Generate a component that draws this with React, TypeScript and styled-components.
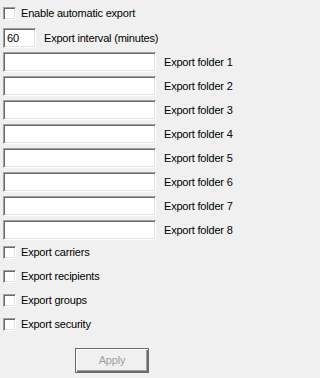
import React from "react";
import styled, { createGlobalStyle } from "styled-components";

const Global = createGlobalStyle`
  html, body {
    margin: 0;
    padding: 0;
    background: #f0f0f0;
  }
  body {
    font-family: "Liberation Sans", Arial, sans-serif;
    font-size: 11px;
    letter-spacing: -0.2px;
    color: #000;
  }
`;

const Page = styled.div`
  width: 236px;
  height: 378px;
  box-sizing: border-box;
  padding: 7px 0 0 3px;
  display: flex;
  flex-direction: column;
  background: #f0f0f0;
`;

const CheckRow = styled.label`
  display: flex;
  align-items: center;
  height: 13px;
  gap: 5px;
  line-height: 13px;
  white-space: nowrap;
`;

const CheckBox = styled.span`
  display: block;
  width: 13px;
  height: 13px;
  box-sizing: border-box;
  flex: none;
  background: #fff;
  border-top: 1px solid #a0a0a0;
  border-left: 1px solid #a0a0a0;
  border-right: 1px solid #fff;
  border-bottom: 1px solid #fff;
  box-shadow: inset 1px 1px 0 #696969, inset -1px -1px 0 #e3e3e3;
`;

const Field = styled.div<{ $w: number }>`
  width: ${(p) => p.$w}px;
  height: 20px;
  box-sizing: border-box;
  flex: none;
  background: #fff;
  border-top: 1px solid #a0a0a0;
  border-left: 1px solid #a0a0a0;
  border-right: 1px solid #fff;
  border-bottom: 1px solid #fff;
  box-shadow: inset 1px 1px 0 #696969, inset -1px -1px 0 #e3e3e3;
  padding: 0 0 0 3px;
  display: flex;
  align-items: center;
  line-height: 13px;
`;

const FieldRow = styled.div<{ $gap: number }>`
  display: flex;
  align-items: center;
  gap: ${(p) => p.$gap}px;
  white-space: nowrap;
  line-height: 13px;
`;

const Section = styled.div<{ $top: number; $gap: number }>`
  display: flex;
  flex-direction: column;
  margin-top: ${(p) => p.$top}px;
  gap: ${(p) => p.$gap}px;
`;

const ButtonRow = styled.div`
  margin-top: 17px;
  padding-left: 72px;
  display: flex;
`;

const Button = styled.button`
  width: 74px;
  height: 25px;
  box-sizing: border-box;
  margin: 0;
  padding: 0;
  background: #f0f0f0;
  border: 1px solid #6a6a6a;
  box-shadow: inset 1px 1px 0 #fff, inset -1px -1px 0 #6a6a6a,
    inset -2px -2px 0 #a0a0a0;
  font-family: "Liberation Sans", Arial, sans-serif;
  font-size: 11px;
  letter-spacing: -0.2px;
  color: #a0a0a0;
  line-height: 13px;
`;

const folders = [1, 2, 3, 4, 5, 6, 7, 8];
const checks = [
  "Export carriers",
  "Export recipients",
  "Export groups",
  "Export security",
];

export default function App() {
  return (
    <>
      <Global />
      <Page>
        <CheckRow>
          <CheckBox />
          <span>Enable automatic export</span>
        </CheckRow>
        <Section $top={8} $gap={4}>
          <FieldRow $gap={8}>
            <Field $w={33}>60</Field>
            <span>Export interval (minutes)</span>
          </FieldRow>
          {folders.map((n) => (
            <FieldRow key={n} $gap={8}>
              <Field $w={153} />
              <span>Export folder {n}</span>
            </FieldRow>
          ))}
        </Section>
        <Section $top={6} $gap={11}>
          {checks.map((c) => (
            <CheckRow key={c}>
              <CheckBox />
              <span>{c}</span>
            </CheckRow>
          ))}
        </Section>
        <ButtonRow>
          <Button disabled>Apply</Button>
        </ButtonRow>
      </Page>
    </>
  );
}
